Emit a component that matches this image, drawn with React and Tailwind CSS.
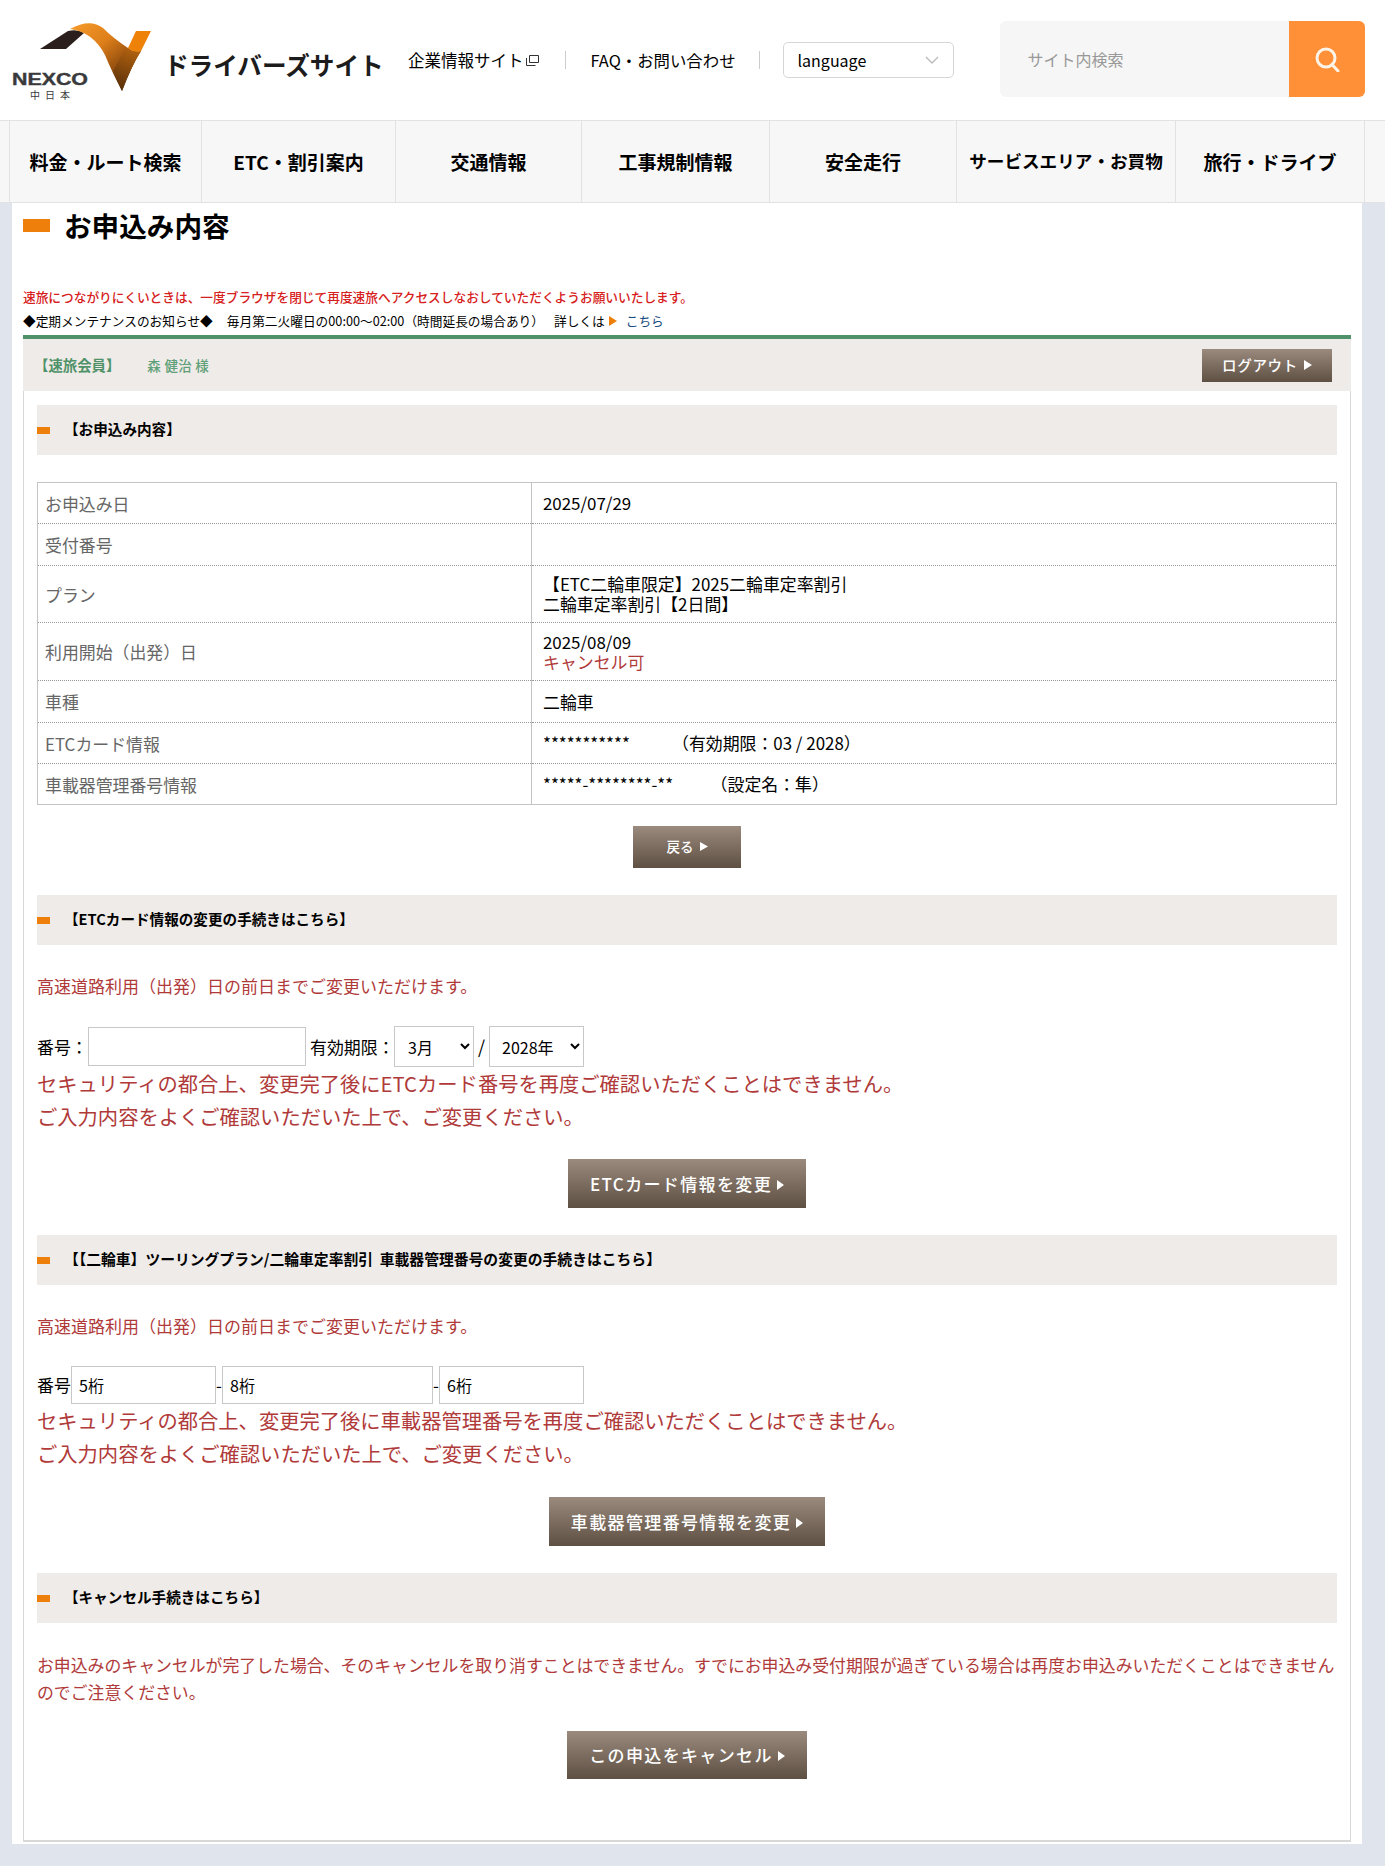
const FONT = { fontFamily: '"Noto Sans CJK JP", "Noto Sans", sans-serif' };

function Logo() {
  return (
    <svg width="160" height="94" viewBox="0 0 160 94" className="shrink-0 -mt-[6px]">
      <defs>
        <linearGradient id="ribbon" gradientUnits="userSpaceOnUse" x1="72" y1="14" x2="124" y2="80">
          <stop offset="0" stopColor="#f59a2a" />
          <stop offset="0.4" stopColor="#de7f1a" />
          <stop offset="0.72" stopColor="#96500f" />
          <stop offset="1" stopColor="#4a2808" />
        </linearGradient>
        <linearGradient id="fold" gradientUnits="userSpaceOnUse" x1="122" y1="80" x2="140" y2="38">
          <stop offset="0" stopColor="#5a3009" />
          <stop offset="1" stopColor="#b9660f" />
        </linearGradient>
      </defs>
      <path d="M40 39 L68 21 Q78 19 84 23 L66 39 Z" fill="#2a1f1c" />
      <path d="M70 19 Q90 8 103 18 Q113 28 128 38 Q134 43 141 41 Q132 55 122 81 Q112 62 105 45 Q93 22 70 19 Z" fill="url(#ribbon)" />
      <path d="M128 38 Q134 43 141 41 Q132 55 122 81 Q118 72 113 62 Q120 46 128 38 Z" fill="url(#fold)" />
      <path d="M128 38 L136 21 L151 21 L141 41 Q134 43 128 38 Z" fill="#ee8208" />
      <text x="12" y="75" fontSize="16.5" fontWeight="900" fill="#3a3a3c" fontFamily="Liberation Sans, sans-serif" textLength="76" lengthAdjust="spacingAndGlyphs" stroke="#3a3a3c" strokeWidth="0.4">NEXCO</text>
      <text x="30" y="89" fontSize="10" fill="#3a3a3c" fontFamily="Noto Sans CJK JP, sans-serif" textLength="40" lengthAdjust="spacing">中日本</text>
    </svg>
  );
}

function SearchGlyph() {
  return (
    <svg width="26" height="26" viewBox="0 0 26 26" fill="none" stroke="#fdf3e6" strokeWidth="3">
      <circle cx="12" cy="12" r="9" />
      <path d="M18 18.5 L24 25" strokeLinecap="round" />
    </svg>
  );
}

function Tri({ className }) {
  return (
    <svg viewBox="0 0 8 10" preserveAspectRatio="none" className={`inline-block align-[1px] fill-current ${className}`}>
      <path d="M0 0 L8 5 L0 10 Z" />
    </svg>
  );
}

function Button({ children, className }) {
  return (
    <button className={`block mx-auto bg-gradient-to-b from-[#9a8b7e] to-[#5f5044] text-white font-medium text-center ${className}`}>
      {children}
    </button>
  );
}

function SectionHead({ children, size = "text-[14.6px]" }) {
  return (
    <div className="h-[50px] bg-[#efebe8] flex items-center">
      <span className="w-[13px] h-[7px] bg-[#ee7f0a] shrink-0" />
      <span className={`ml-[14px] ${size} font-bold text-black whitespace-nowrap -mt-[2px]`}>{children}</span>
    </div>
  );
}

function Row({ label, h, children }) {
  return (
    <tr style={{ height: h }} className="border-b border-dotted border-[#999] last:border-b-0">
      <td className="w-[494px] pl-[7px] pt-[1px] text-[16.9px] text-[#666] border-r border-[#c4c4c4] align-middle">{label}</td>
      <td className="pl-[11px] text-[16.9px] leading-[20px] text-black align-middle">{children}</td>
    </tr>
  );
}

const navItems = [
  { t: "料金・ルート検索", w: "w-[192px]" },
  { t: "ETC・割引案内", w: "w-[194px]" },
  { t: "交通情報", w: "w-[186px]" },
  { t: "工事規制情報", w: "w-[188px]" },
  { t: "安全走行", w: "w-[187px]" },
  { t: "サービスエリア・お買物", w: "w-[219px]", small: true },
  { t: "旅行・ドライブ", w: "w-[189px]" },
];

export default function App() {
  return (
    <div style={FONT} className="w-[1385px] h-[1866px] bg-[#e0e5ed] overflow-hidden">
      {/* Header */}
      <header className="h-[120px] bg-white flex items-center">
        <Logo />
        <div className="ml-[4px] w-[244px] text-[24.6px] font-bold text-[#1c1c1c] mt-[8px] whitespace-nowrap">ドライバーズサイト</div>
        <a className="text-[16.5px] text-black whitespace-nowrap flex items-center">
          企業情報サイト
          <svg width="15" height="13" viewBox="0 0 15 13" fill="none" stroke="#333" strokeWidth="1" className="ml-px">
            <path d="M4.5 1.5h9v7h-9z" />
            <path d="M1.5 4v7.5h9" />
          </svg>
        </a>
        <span className="w-px h-[18px] bg-[#ccc] ml-[25px]" />
        <a className="ml-[25px] text-[16.4px] text-black whitespace-nowrap">FAQ・お問い合わせ</a>
        <span className="w-px h-[18px] bg-[#ccc] ml-[23px]" />
        <div className="ml-[23px] w-[171px] h-[36px] border border-[#d6d6d6] rounded-[5px] flex items-center justify-between px-[14px] text-[16px] text-black">
          language
          <svg width="14" height="8" viewBox="0 0 14 8" fill="none" stroke="#bbb" strokeWidth="1.4"><path d="M1 1l6 6 6-6" /></svg>
        </div>
        <div className="ml-[46px] w-[365px] h-[76px] rounded-[6px] overflow-hidden flex bg-[#f6f6f6] -mt-[2px]">
          <div className="flex-1 flex items-center pl-[28px] text-[16px] text-[#999]">サイト内検索</div>
          <div className="w-[76px] bg-[#ff9037] flex items-center justify-center"><SearchGlyph /></div>
        </div>
      </header>

      {/* Global nav */}
      <nav className="h-[83px] bg-[#f7f7f7] border-y border-[#e2e2e2] flex pl-[9px]">
        {navItems.map((n) => (
          <div key={n.t} className={`${n.w} border-l border-[#e2e2e2] flex items-center justify-center font-bold text-black whitespace-nowrap ${n.small ? "text-[17.6px]" : "text-[19px] pt-[2px]"}`}>
            {n.t}
          </div>
        ))}
        <div className="flex-1 border-l border-[#e2e2e2]" />
      </nav>

      {/* Page body */}
      <main className="ml-[12px] w-[1350px] h-[1641px] bg-white px-[11px]">
        <h1 className="h-[50px] flex items-center text-[27.6px] font-bold text-black">
          <span className="w-[27px] h-[13px] bg-[#ee7f0a] mr-[14px] -mt-[5px]" />
          <span className="-mt-[4px]">お申込み内容</span>
        </h1>
        <p className="mt-[35px] text-[12.7px] font-medium leading-[18px] text-[#d62020]">
          速旅につながりにくいときは、一度ブラウザを閉じて再度速旅へアクセスしなおしていただくようお願いいたします。
        </p>
        <p className="mt-[6px] text-[12.7px] leading-[18px] text-black whitespace-nowrap flex items-center">
          <span>◆定期メンテナンスのお知らせ◆</span>
          <span className="ml-[14px]">毎月第二火曜日の00:00～02:00（時間延長の場合あり）</span>
          <span className="ml-[10px]">詳しくは</span>
          <Tri className="w-[8px] h-[10px] ml-[4px] text-[#ee7f0a]" />
          <span className="text-[#174a80] ml-[9px]">こちら</span>
        </p>

        <div className="mt-[5px] border-t-4 border-[#4f9269]">
          <div className="h-[52px] bg-[#efebe8] flex items-center pl-[11px] pr-[19px]">
            <span className="text-[14.4px] font-bold text-[#4f9269]">【速旅会員】</span>
            <span className="ml-[27px] text-[13.5px] font-medium text-[#5fa078] tracking-[0.02em]">森 健治 様</span>
            <button className="ml-auto w-[130px] h-[33px] bg-gradient-to-b from-[#9a8b7e] to-[#5f5044] text-white text-[14.5px] font-medium tracking-[0.05em]">ログアウト <Tri className="w-[8px] h-[10px] ml-[2px]" /></button>
          </div>

          <div className="h-[1451px] border-x border-b-2 border-[#d8d8d8] px-[13px] pt-[14px]">
            <SectionHead>【お申込み内容】</SectionHead>

            <table className="mt-[27px] w-full border-collapse border border-[#c4c4c4]">
              <tbody>
                <Row label="お申込み日" h={41}>2025/07/29</Row>
                <Row label="受付番号" h={42} />
                <Row label="プラン" h={57}>
                  <div>【ETC二輪車限定】2025二輪車定率割引</div>
                  <div>二輪車定率割引【2日間】</div>
                </Row>
                <Row label="利用開始（出発）日" h={58}>
                  <div>2025/08/09</div>
                  <div className="text-[#b03a3a]">キャンセル可</div>
                </Row>
                <Row label="車種" h={42}>二輪車</Row>
                <Row label="ETCカード情報" h={41}>***********　　　（有効期限：03 / 2028）</Row>
                <Row label="車載器管理番号情報" h={41}>*****-********-**　　&nbsp;（設定名：隼）</Row>
              </tbody>
            </table>

            <Button className="mt-[21px] w-[108px] h-[42px] text-[13.5px] pb-[2px]">戻る<Tri className="w-[8px] h-[9px] ml-[6px]" /></Button>

            <div className="mt-[27px]"><SectionHead>【ETCカード情報の変更の手続きはこちら】</SectionHead></div>
            <p className="mt-[28px] text-[17px] leading-[26px] text-[#b03a3a]">高速道路利用（出発）日の前日までご変更いただけます。</p>

            <div className="mt-[27px] h-[41px] flex items-center text-[16.9px] text-black">
              <span className="w-[51px] shrink-0">番号：</span>
              <input className="w-[218px] h-[39px] border border-[#c8c8c8] bg-white" />
              <span className="w-[88px] pl-[4px] whitespace-nowrap">有効期限：</span>
              <select defaultValue="3月" className="w-[80px] h-[41px] border border-[#c8c8c8] bg-white pl-[9px] text-[16px]"><option>3月</option></select>
              <span className="w-[15px] text-center text-[18px]">/</span>
              <select defaultValue="2028年" className="w-[95px] h-[41px] border border-[#c8c8c8] bg-white pl-[8px] text-[16px]"><option>2028年</option></select>
            </div>
            <div className="text-[20.3px] leading-[33px] text-[#b03a3a]">
              <div>セキュリティの都合上、変更完了後にETCカード番号を再度ご確認いただくことはできません。</div>
              <div>ご入力内容をよくご確認いただいた上で、ご変更ください。</div>
            </div>
            <Button className="mt-[26px] w-[238px] h-[49px] text-[17px] tracking-[0.08em]">ETCカード情報を変更<Tri className="w-[7px] h-[10px] ml-[5px]" /></Button>

            <div className="mt-[27px]"><SectionHead size="text-[14.8px]">【【二輪車】ツーリングプラン/二輪車定率割引&nbsp; 車載器管理番号の変更の手続きはこちら】</SectionHead></div>
            <p className="mt-[28px] text-[17px] leading-[26px] text-[#b03a3a]">高速道路利用（出発）日の前日までご変更いただけます。</p>

            <div className="mt-[27px] h-[38px] flex items-center text-[16.9px] text-black">
              <span className="w-[34px] shrink-0">番号</span>
              <input placeholder="5桁" className="w-[145px] h-[38px] border border-[#c8c8c8] bg-white pl-[7px] text-[16px] placeholder:text-black" />
              <span className="w-[6px] text-center">-</span>
              <input placeholder="8桁" className="w-[211px] h-[38px] border border-[#c8c8c8] bg-white pl-[7px] text-[16px] placeholder:text-black" />
              <span className="w-[6px] text-center">-</span>
              <input placeholder="6桁" className="w-[145px] h-[38px] border border-[#c8c8c8] bg-white pl-[7px] text-[16px] placeholder:text-black" />
            </div>
            <div className="text-[20.3px] leading-[33px] text-[#b03a3a]">
              <div>セキュリティの都合上、変更完了後に車載器管理番号を再度ご確認いただくことはできません。</div>
              <div>ご入力内容をよくご確認いただいた上で、ご変更ください。</div>
            </div>
            <Button className="mt-[27px] w-[276px] h-[49px] text-[17px] tracking-[0.08em]">車載器管理番号情報を変更<Tri className="w-[7px] h-[10px] ml-[5px]" /></Button>

            <div className="mt-[27px]"><SectionHead>【キャンセル手続きはこちら】</SectionHead></div>
            <p className="mt-[28px] text-[16.88px] leading-[27px] text-[#b03a3a]">お申込みのキャンセルが完了した場合、そのキャンセルを取り消すことはできません。すでにお申込み受付期限が過ぎている場合は再度お申込みいただくことはできませんのでご注意ください。</p>
            <Button className="mt-[26px] w-[240px] h-[48px] text-[17px] tracking-[0.08em]">この申込をキャンセル<Tri className="w-[7px] h-[10px] ml-[5px]" /></Button>
          </div>
        </div>
      </main>
    </div>
  );
}
